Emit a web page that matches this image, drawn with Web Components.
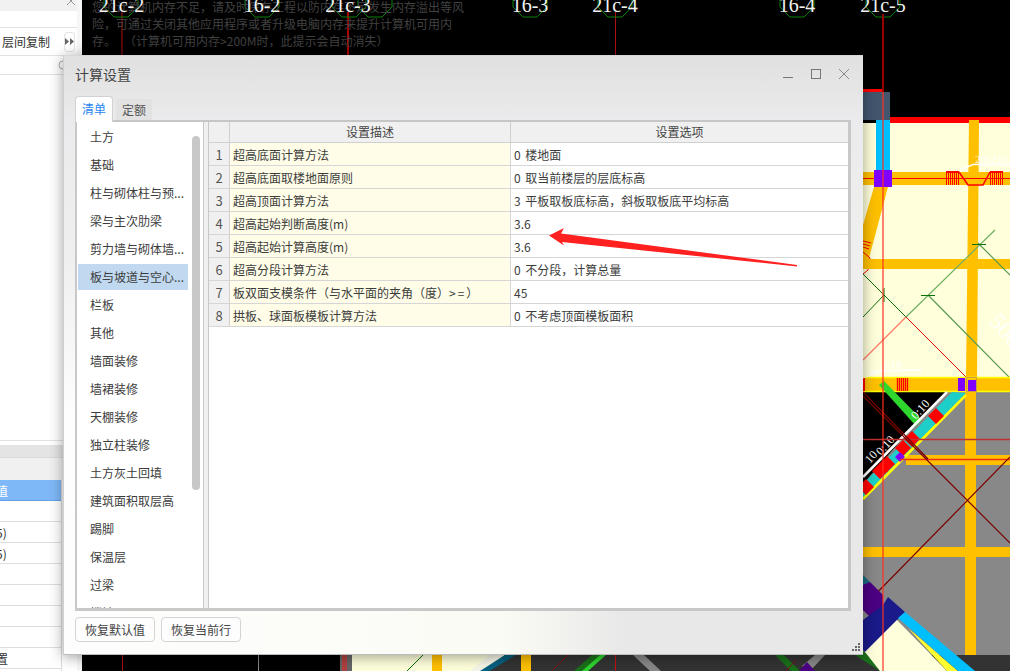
<!DOCTYPE html>
<html lang="zh-CN">
<head>
<meta charset="utf-8">
<title>计算设置</title>
<style>
  html, body { margin: 0; padding: 0; background: #000; }
  body { font: 12px "Noto Sans CJK SC", "Noto Sans", sans-serif; color: #3c3c3c; }
</style>
</head>
<body>
<desk-top>
  <side-panel slot="side">
    <span slot="copy">层间复制</span>
    <side-row slot="rows" selected>值</side-row>
    <side-row slot="rows"></side-row>
    <side-row slot="rows">5)</side-row>
    <side-row slot="rows">5)</side-row>
    <side-row slot="rows"></side-row>
    <side-row slot="rows"></side-row>
    <side-row slot="rows"></side-row>
    <side-row slot="rows"></side-row>
    <side-row slot="rows">置</side-row>
    <side-row slot="rows"></side-row>
  </side-panel>
  <cad-canvas slot="canvas"></cad-canvas>

  <calc-dialog slot="window" heading="计算设置">
    <dialog-tab slot="tabs" active>清单</dialog-tab>
    <dialog-tab slot="tabs">定额</dialog-tab>

    <nav-item slot="nav">土方</nav-item>
    <nav-item slot="nav">基础</nav-item>
    <nav-item slot="nav">柱与砌体柱与预...</nav-item>
    <nav-item slot="nav">梁与主次肋梁</nav-item>
    <nav-item slot="nav">剪力墙与砌体墙...</nav-item>
    <nav-item slot="nav" selected>板与坡道与空心...</nav-item>
    <nav-item slot="nav">栏板</nav-item>
    <nav-item slot="nav">其他</nav-item>
    <nav-item slot="nav">墙面装修</nav-item>
    <nav-item slot="nav">墙裙装修</nav-item>
    <nav-item slot="nav">天棚装修</nav-item>
    <nav-item slot="nav">独立柱装修</nav-item>
    <nav-item slot="nav">土方灰土回填</nav-item>
    <nav-item slot="nav">建筑面积取层高</nav-item>
    <nav-item slot="nav">踢脚</nav-item>
    <nav-item slot="nav">保温层</nav-item>
    <nav-item slot="nav">过梁</nav-item>
    <nav-item slot="nav">楼地面</nav-item>

    <settings-row slot="rows" num="1"><span slot="name">超高底面计算方法</span><span slot="value">0 楼地面</span></settings-row>
    <settings-row slot="rows" num="2"><span slot="name">超高底面取楼地面原则</span><span slot="value">0 取当前楼层的层底标高</span></settings-row>
    <settings-row slot="rows" num="3"><span slot="name">超高顶面计算方法</span><span slot="value">3 平板取板底标高，斜板取板底平均标高</span></settings-row>
    <settings-row slot="rows" num="4"><span slot="name">超高起始判断高度(m)</span><span slot="value">3.6</span></settings-row>
    <settings-row slot="rows" num="5"><span slot="name">超高起始计算高度(m)</span><span slot="value">3.6</span></settings-row>
    <settings-row slot="rows" num="6"><span slot="name">超高分段计算方法</span><span slot="value">0 不分段，计算总量</span></settings-row>
    <settings-row slot="rows" num="7"><span slot="name">板双面支模条件（与水平面的夹角（度）<span style="letter-spacing:2px">&gt;=</span>）</span><span slot="value">45</span></settings-row>
    <settings-row slot="rows" num="8"><span slot="name">拱板、球面板模板计算方法</span><span slot="value">0 不考虑顶面模板面积</span></settings-row>

    <action-button slot="actions">恢复默认值</action-button>
    <action-button slot="actions">恢复当前行</action-button>
  </calc-dialog>

  <red-arrow slot="window"></red-arrow>
</desk-top>

<script>
class DeskTop extends HTMLElement {
  constructor() {
    super()
    this.attachShadow({ mode: 'open' })
    this.shadowRoot.innerHTML = `
      <style>
        :host { display: flex; position: relative; width: 1010px; height: 671px; overflow: hidden; }
      </style>
      <slot name="side"></slot>
      <slot name="canvas"></slot>
      <slot name="window"></slot>
    `
  }
}

class SidePanel extends HTMLElement {
  constructor() {
    super()
    this.attachShadow({ mode: 'open' })
    this.shadowRoot.innerHTML = `
      <style>
        :host { display: flex; flex-direction: column; flex: 0 0 82px; height: 671px; box-sizing: border-box;
                background: #fff; border-right: 5px solid #f6f6f6; overflow: hidden; color: #333; position: relative; }
        :host > div, div { flex: none; }
        .top { height: 11px; background: #f1f1f1; position: relative; overflow: hidden; }
        .top svg { position: absolute; left: 66px; top: -4px; }
        .blank { height: 16px; border-bottom: 1px solid #e2e2e2; }
        .copy { height: 27px; display: flex; align-items: center; padding-left: 2px; border-bottom: 1px solid #e2e2e2; }
        .more { margin-left: auto; margin-right: 2px; width: 9px; height: 18px; border: 1px solid #e4e4e4; border-radius: 3px;
                display: flex; align-items: center; justify-content: center; }
        .sub { height: 18px; border-bottom: 1px solid #e2e2e2; position: relative; }
        .sub svg { position: absolute; left: 58px; top: 4px; }
        .fill { height: 365px; border-bottom: 1px solid #e2e2e2; }
        .gap { height: 4px; }
        .band { height: 12px; background: #e4e4e4; border-bottom: 1px solid #dcdcdc; }
        .head { height: 22px; background: #f0f0f0; }
        .rows { width: 61px; border-right: 1px solid #dcdcdc; height: 191px; overflow: hidden; }
      </style>
      <div class="top"><svg width="10" height="10" viewBox="0 0 10 10"><path d="M1 1l8 8M9 1l-8 8" stroke="#999" fill="none"/></svg></div>
      <div class="blank"></div>
      <div class="copy">
        <slot name="copy"></slot>
        <div class="more"><svg width="9" height="7" viewBox="0 0 9 7"><path d="M0 0l4 3.5-4 3.5zM5 0l4 3.5-4 3.5z" fill="#666"/></svg></div>
      </div>
      <div class="sub"><svg width="8" height="10" viewBox="0 0 8 10"><circle cx="5" cy="5" r="4" fill="none" stroke="#aaa"/></svg></div>
      <div class="fill"></div>
      <div class="gap"></div>
      <div class="band"></div>
      <div class="head"></div>
      <div class="rows"><slot name="rows"></slot></div>
    `
  }
}

class SideRow extends HTMLElement {
  constructor() {
    super()
    this.attachShadow({ mode: 'open' })
    this.shadowRoot.innerHTML = `
      <style>
        :host { display: block; height: 20px; line-height: 21px; border-bottom: 1px solid #dedede; overflow: hidden;
                white-space: nowrap; text-indent: -4px; }
        :host([selected]) { background: #7fb8f7; color: #fff; border-bottom-color: #5fa2ea; }
      </style>
      <slot></slot>
    `
  }
}

class CadCanvas extends HTMLElement {
  constructor() {
    super()
    this.attachShadow({ mode: 'open' })
    this.shadowRoot.innerHTML = `
      <style>
        :host { display: block; flex: 1; height: 671px; background: #000; }
        svg { display: block; }
        .hint { font: 12px "Noto Sans CJK SC", sans-serif; fill: #414141; }
        .label { font: 20px "Liberation Serif", serif; fill: #f2f2f2; text-anchor: middle; }
        .dim { font: 11px "Liberation Serif", serif; fill: #fff; }
      </style>
      <svg width="928" height="671" viewBox="82 0 928 671">
        <defs>
          <polygon id="oct" points="-7,-17 7,-17 17,-7 17,7 7,17 -7,17 -17,7 -17,-7" fill="none" stroke="#0a800a"/>
          <polygon id="dia" points="0,-8 8,0 0,8 -8,0" fill="#f00"/>
        </defs>
        <rect x="82" width="928" height="671" fill="#000"/>

        <!-- axis lines and labels above the dialog -->
        <path d="M122 12V60M615.5 12V60" stroke="#b01010"/>
        <path d="M348 12V60" stroke="#a00" stroke-width="2"/>
        <use href="#oct" x="121" y="0"/><use href="#oct" x="262" y="0"/><use href="#oct" x="349" y="0"/>
        <use href="#oct" x="375" y="0"/><use href="#oct" x="530" y="0"/><use href="#oct" x="615" y="0"/>
        <use href="#oct" x="797" y="0"/><use href="#oct" x="883" y="0"/>
        <text class="hint" x="92" y="12">您的计算机内存不足，请及时保存工程以防内存不足发生内存溢出等风</text>
        <text class="hint" x="92" y="29">险，可通过关闭其他应用程序或者升级电脑内存来提升计算机可用内</text>
        <text class="hint" x="92" y="46">存。&#160;&#160;&#160;（计算机可用内存&gt;200M时，此提示会自动消失）</text>
        <text class="label" x="121.5" y="12">21c-2</text>
        <text class="label" x="262" y="12">16-2</text>
        <text class="label" x="348" y="12">21c-3</text>
        <text class="label" x="530" y="12">16-3</text>
        <text class="label" x="615" y="12">21c-4</text>
        <text class="label" x="797" y="12">16-4</text>
        <text class="label" x="883" y="12">21c-5</text>

        <!-- floor right of the dialog -->
        <rect x="863" y="123" width="147" height="255" fill="#ffffdc"/>
        <rect x="863" y="89" width="20" height="3" fill="#f00"/>
        <rect x="863" y="92" width="27" height="28" fill="#42566e"/>
        <rect x="890" y="117" width="120" height="6" fill="#f00"/>
        <rect x="876" y="120" width="14" height="52" fill="#00bfff"/>

        <polygon points="969,120 979,120 977,378 966,378" fill="#ffc000"/>
        <rect x="863" y="172" width="147" height="13" fill="#ffc000"/>
        <path d="M863 178.500H1010" stroke="#f00"/>
        <rect x="874" y="170" width="18" height="17" fill="#8000ff"/>
        <path d="M946.500 171V185M948.500 171V185M950.500 171V185M952.500 171V185M954.500 171V185M956.500 171V185M958.500 171V185M990.500 171V185M992.500 171V185M994.500 171V185M996.500 171V185M998.500 171V185M1000.500 171V185M1002.500 171V185" stroke="#f00"/>
        <rect x="946" y="171" width="13" height="2" fill="#f00"/><rect x="990" y="171" width="13" height="2" fill="#f00"/>
        <path d="M959 172L968 185H983L990 172" fill="none" stroke="#f00" stroke-width="1.500"/>
        <path d="M960 170L973 164.500H1010" fill="none" stroke="#fff" stroke-width="1.500"/>
        <text class="dim" x="975" y="163" opacity=".85">201210</text>

        <polygon points="874,187 888,187 868,262 863,262 863,225" fill="#ffc000"/>
        <path d="M863 241L871 243M863 244L870 246M863 247L869 249" stroke="#f00"/>
        <path d="M863 252L870 258L868 270L863 274" fill="none" stroke="#f00"/>
        <rect x="863" y="259" width="147" height="10" fill="#ffc000"/>

        <path d="M863 274L906 317" stroke="#0a700a"/>
        <path d="M863 317L884 295" stroke="#0a700a"/>
        <path d="M906 317L995 230" stroke="#6fb060" stroke-width="1.200"/>
        <path d="M978 243L1010 275M928 295L1010 378" stroke="#5a9a50" stroke-width="1.200"/>
        <path d="M863 360L906 317" stroke="#ff7a66" stroke-width="1.200"/>
        <path d="M906 317L1010 421" stroke="#e01010"/>
        <path d="M884 288V302M921 295.500H935M972 244.500H986" stroke="#0a700a"/>
        <text class="dim" style="font-size:24px" transform="translate(988,322) rotate(48)" opacity=".9">500</text>

        <!-- wall band and the room under it -->
        <rect x="863" y="392" width="147" height="279" fill="#888"/>
        <polygon points="863,392 947,392 863,478" fill="#000"/>
        <polygon points="917,422 863,484 863,478 912,424" fill="#000"/>
        <rect x="863" y="377" width="147" height="15" fill="#ffc000"/>
        <path d="M863 377.500H1010M863 391.500H1010" stroke="#ff0" stroke-width="1.500"/>
        <rect x="863" y="378" width="2" height="13" fill="#f00"/>
        <path d="M897.500 378V391M899.500 378V391M901.500 378V391M903.500 378V391M905.500 378V391M907.500 378V391" stroke="#f00" stroke-width="1.300"/>
        <rect x="958" y="378" width="7" height="13" fill="#8000ff"/>
        <rect x="968" y="380" width="8" height="11" fill="#8000ff"/>
        <rect x="966.500" y="377.500" width="10" height="14" fill="none" stroke="#c8a040"/>
        <path d="M863 378L886 369" stroke="#fff" fill="none"/>
        <path d="M870 372Q890 370 922 370" stroke="#fff" fill="none" stroke-width="1.500"/>
        <text class="dim" x="882" y="368">0:10</text>

        <rect x="965" y="392" width="11" height="279" fill="#ffc000"/>
        <rect x="906" y="455" width="104" height="10" fill="#ffc000"/>
        <rect x="863" y="547" width="147" height="10" fill="#ffc000"/>

        <polygon points="879,385 884,381 922,420 916,426" fill="#2ed62e"/>
        <polygon points="952,392 966,393 863,498 863,484" fill="#1dcfc8"/>
        <path d="M966 395L863 499" stroke="#ff0" stroke-width="2.500"/>
        <path d="M947 392L863 477" stroke="#fff" stroke-width="2.500"/>
        <use href="#dia" x="936" y="416"/><use href="#dia" x="912" y="439"/><use href="#dia" x="903" y="448"/>
        <use href="#dia" x="887" y="464"/><use href="#dia" x="880" y="471"/><use href="#dia" x="866" y="487"/>
        <polygon points="900,452 905,457 900,462 895,457" fill="#8000ff"/>
        <text class="dim" transform="translate(916,420) rotate(-48)" style="font-size:12px">0:10</text>
        <text class="dim" transform="translate(881,456) rotate(-48)" style="font-size:12px">0:10</text>
        <text class="dim" transform="translate(870,464) rotate(-48)" style="font-size:12px">10</text>

        <path d="M863 439.500H1010" stroke="#c03030" stroke-width="1.300"/>
        <path d="M900 459.500H1010" stroke="#f03010" stroke-width="1.300"/>
        <path d="M863 396L1010 543M1010 457L863 607M863 392L928 459" stroke="#7a0000" stroke-width="1.200"/>

        <!-- bottom corner -->
        <rect x="82" y="655" width="258" height="16" fill="#000"/>
        <rect x="340" y="655" width="670" height="16" fill="#333"/>
        <rect x="340" y="655" width="12" height="16" fill="#666"/>
        <rect x="342" y="655" width="5" height="16" fill="#b04040"/>
        <rect x="352" y="655" width="138" height="16" fill="#ffffdc"/>
        <polygon points="470,655 500,655 480,671 440,671" fill="#ffffdc"/>
        <polygon points="490,655 505,655 482,671 470,671" fill="#f6f6e8"/>
        <polygon points="505,655 516,655 490,671 480,671" fill="#07607f"/>
        <polygon points="516,655 530,655 530,671 490,671" fill="#333"/>
        <rect x="432" y="655" width="10" height="16" fill="#ffc000"/>
        <rect x="521" y="655" width="10" height="16" fill="#ffc000"/>
        <path d="M423 655L407 671" stroke="#0a700a"/>
        <path d="M568 655L552 671" stroke="#801010"/>
        <polygon points="592,655 600,655 582,671 574,671" fill="#1a701a"/>
        <polygon points="600,655 606,655 588,671 582,671" fill="#2ed62e"/>
        <path d="M615.500 655V671" stroke="#c81010"/>
        <polygon points="633,655 644,655 661,671 650,671" fill="#888"/>
        <path d="M122.500 655V671" stroke="#b01010"/><path d="M258.500 655V671" stroke="#888"/>

        <polygon points="775,655 784,655 800,671 791,671" fill="#1a701a"/>
        <path d="M796 660L786 671" stroke="#801010"/>
        <polygon points="825,655 815,655 802,666 810,671" fill="#888"/>
        <polygon points="807,662 815,671 799,671" fill="#4b0082"/>
        <polygon points="855,655 863,651 890,671 880,671" fill="#1a701a"/>

        <polygon points="863,575 870,582 863,590" fill="#1a6a80"/>
        <polygon points="870,582 883,595 883,607 870,617 863,610 863,585" fill="#4b0082"/>
        <polygon points="888,597 905,612 865,652 863,650 863,620 883,605" fill="#1a1a8a"/>
        <polygon points="897,620 947,671 880,671 865,652" fill="#ffffdc"/>
        <polygon points="908,628 958,671 947,671" fill="#ffff30"/>
        <polygon points="905,612 975,671 958,671 898,618" fill="#00bfff"/>

        <path d="M883 92V671" stroke="#ff3020" stroke-width="2" opacity=".6"/>
        <path d="M883 14V92" stroke="#900" stroke-width="2"/>
      </svg>
    `
  }
}

class CalcDialog extends HTMLElement {
  constructor() {
    super()
    this.attachShadow({ mode: 'open' })
    this.shadowRoot.innerHTML = `
      <style>
        :host { display: flex; flex-direction: column; position: absolute; left: 63px; top: 55px; width: 800px; height: 600px;
                box-sizing: border-box; padding: 0 12px 0 11px; border: 1px solid #cfcfcf; border-top-color: #d8d8d8; border-right: 0;
                border-bottom-color: #bdbdbd; box-shadow: 0 2px 13px rgba(0, 0, 0, .38);
                background:
                  linear-gradient(180deg, #e0e0e0 0, #ebebed 65px, #efefef 200px, rgba(239, 239, 239, 0) 360px),
                  linear-gradient(90deg, #fdfdfd 0, #fbfbf5 55%, #e8e8e8 70%, #e8e8e8 100%); }
        header { display: flex; align-items: center; height: 36px; padding-bottom: 4px; padding-right: 2px; flex: none; }
        h1 { margin: 0; font: 400 14px "Noto Sans CJK SC", sans-serif; color: #444; flex: 1; }
        .controls { display: flex; gap: 18px; align-items: center; height: 10px; }
        .controls svg { display: block; }
        .tabs { display: flex; gap: 3px; align-items: flex-end; height: 24px; flex: none; position: relative; z-index: 1; }
        .body { display: flex; flex: none; height: 491px; box-sizing: border-box; background: #fff;
                border: solid #c8c8c8; border-width: 2px 3px 3px 2px; border-top-color: #c6c6c6; }
        .nav { position: relative; width: 126px; flex: none; overflow: hidden; padding: 2px 0 0 1px; box-sizing: border-box; }
        .thumb { position: absolute; left: 115px; top: 14px; width: 8px; height: 354px; background: #c8c8c8; border-radius: 4px; }
        .split { width: 4px; flex: none; background: #f0f0f0; border: solid #c8c8c8; border-width: 0 1px; }
        .table { flex: 1; min-width: 0; }
        .thead { display: grid; grid-template-columns: 21px 281px 1fr; height: 21px; background: #f0f0f0; }
        .thead div { display: flex; align-items: center; justify-content: center; box-sizing: border-box; height: 21px; padding-bottom: 1px;
                     border-bottom: 1px solid #d0d0d0; border-right: 1px solid #cfcfcf; color: #444; }
        .thead div:last-child { border-right: 0; }
        .rows { display: block; }
        footer { display: flex; gap: 6px; padding-top: 6px; flex: none; }
        .grip { position: absolute; right: 3px; bottom: 3px; }
      </style>
      <header>
        <h1></h1>
        <div class="controls">
          <svg width="10" height="10" viewBox="0 0 10 10"><path d="M0 8.500H10" stroke="#777"/></svg>
          <svg width="10" height="10" viewBox="0 0 10 10"><rect x=".5" y=".5" width="9" height="9" fill="none" stroke="#777"/></svg>
          <svg width="10" height="10" viewBox="0 0 10 10"><path d="M0 0L10 10M10 0L0 10" stroke="#888" fill="none"/></svg>
        </div>
      </header>
      <div class="tabs"><slot name="tabs"></slot></div>
      <div class="body">
        <div class="nav"><slot name="nav"></slot><div class="thumb"></div></div>
        <div class="split"></div>
        <div class="table">
          <div class="thead"><div></div><div>设置描述</div><div>设置选项</div></div>
          <div class="rows"><slot name="rows"></slot></div>
        </div>
      </div>
      <footer><slot name="actions"></slot></footer>
      <svg class="grip" width="8" height="8" viewBox="0 0 8 8" fill="#666">
        <rect x="6" y="0" width="2" height="2"/><rect x="3" y="3" width="2" height="2"/><rect x="6" y="3" width="2" height="2"/>
        <rect x="0" y="6" width="2" height="2"/><rect x="3" y="6" width="2" height="2"/><rect x="6" y="6" width="2" height="2"/>
      </svg>
    `
    this.shadowRoot.querySelector('h1').textContent = this.getAttribute('heading')
  }
}

class DialogTab extends HTMLElement {
  constructor() {
    super()
    this.attachShadow({ mode: 'open' })
    this.shadowRoot.innerHTML = `
      <style>
        :host { display: flex; align-items: center; justify-content: center; box-sizing: border-box; width: 36px; height: 21px;
                padding-bottom: 1px; background: #e2e2e2; border-radius: 3px 3px 0 0; color: #555; }
        :host([active]) { width: 38px; height: 26px; margin-bottom: -2px; background: #fff; color: #2a85f0; padding-bottom: 3px;
                          border: 1px solid #d2d2d2; border-bottom: 0; border-radius: 4px 4px 0 0; }
      </style>
      <slot></slot>
    `
  }
}

class NavItem extends HTMLElement {
  constructor() {
    super()
    this.attachShadow({ mode: 'open' })
    this.shadowRoot.innerHTML = `
      <style>
        :host { display: block; width: 110px; height: 26px; line-height: 26px; margin-bottom: 2px; box-sizing: border-box;
                padding-left: 12px; white-space: nowrap; color: #3c3c3c; }
        :host([selected]) { background: #c0d8f0; }
      </style>
      <slot></slot>
    `
  }
}

class SettingsRow extends HTMLElement {
  constructor() {
    super()
    this.attachShadow({ mode: 'open' })
    this.shadowRoot.innerHTML = `
      <style>
        :host { display: grid; grid-template-columns: 21px 281px 1fr; height: 23px; }
        div { box-sizing: border-box; height: 23px; line-height: 24px; border-bottom: 1px solid #d6d6d6; white-space: nowrap; overflow: hidden; }
        .num { background: #f0f0f0; border-right: 1px solid #d0d0d0; text-align: center; font-size: 13px; color: #555; }
        .name { background: #fffde8; border-right: 1px solid #d6d6d6; padding-left: 3px; }
        .value { background: #fff; padding-left: 3px; word-spacing: 2px; }
      </style>
      <div class="num"></div>
      <div class="name"><slot name="name"></slot></div>
      <div class="value"><slot name="value"></slot></div>
    `
    this.shadowRoot.querySelector('.num').textContent = this.getAttribute('num')
  }
}

class ActionButton extends HTMLElement {
  constructor() {
    super()
    this.attachShadow({ mode: 'open' })
    this.shadowRoot.innerHTML = `
      <style>
        :host { display: inline-flex; align-items: center; justify-content: center; box-sizing: border-box; width: 80px; height: 25px;
                background: #fdfdfd; border: 1px solid #d4d4d4; border-radius: 4px; color: #444; }
      </style>
      <slot></slot>
    `
  }
}

class RedArrow extends HTMLElement {
  constructor() {
    super()
    this.attachShadow({ mode: 'open' })
    this.shadowRoot.innerHTML = `
      <style>
        :host { display: block; position: absolute; left: 540px; top: 220px; width: 264px; height: 54px; }
        svg { display: block; }
      </style>
      <svg width="264" height="54" viewBox="540 220 264 54">
        <polygon points="549,235.500 564,228 561,233.500 797,265 797,266.500 562,242 564,245.500" fill="#ff2020"/>
      </svg>
    `
  }
}

customElements.define('desk-top', DeskTop)
customElements.define('side-panel', SidePanel)
customElements.define('side-row', SideRow)
customElements.define('cad-canvas', CadCanvas)
customElements.define('calc-dialog', CalcDialog)
customElements.define('dialog-tab', DialogTab)
customElements.define('nav-item', NavItem)
customElements.define('settings-row', SettingsRow)
customElements.define('action-button', ActionButton)
customElements.define('red-arrow', RedArrow)
</script>
</body>
</html>
